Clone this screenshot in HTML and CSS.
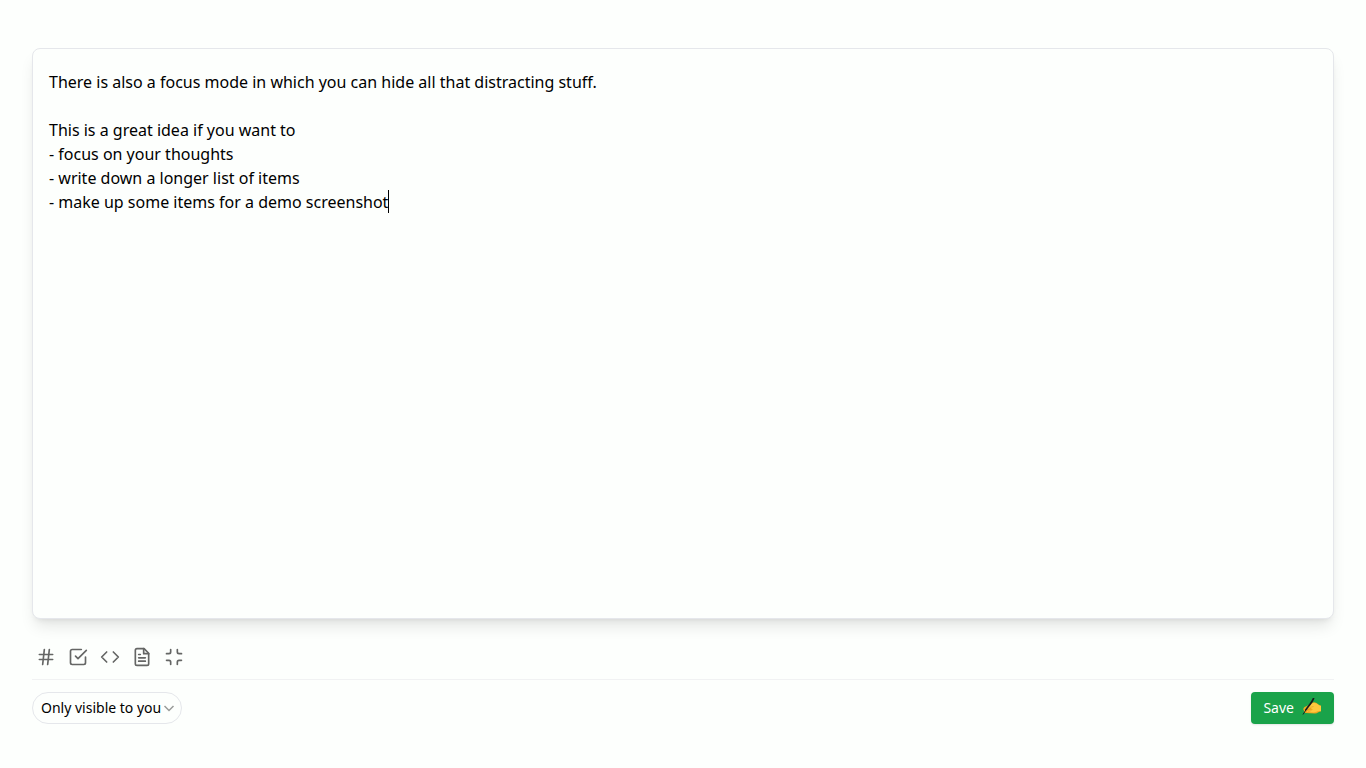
FILE: index.html
```
<!DOCTYPE html>
<html lang="en">
<head>
  <meta charset="UTF-8">
  <meta name="viewport" content="width=device-width, initial-scale=1.0">
  <title>Memo Editor</title>
  <link rel="stylesheet" href="styles.css">
</head>
<body>
  <form class="editor" id="editor">
    <div class="card">
      <textarea class="content" id="content" aria-label="Memo content" spellcheck="false">There is also a focus mode in which you can hide all that distracting stuff.

This is a great idea if you want to
- focus on your thoughts
- write down a longer list of items
- make up some items for a demo screenshot</textarea>
      <span class="caret"></span>
    </div>

    <div class="toolbar">
      <button type="button" class="tool" aria-label="Tag">
        <svg viewBox="0 0 24 24"><path d="M4 9h16M4 15h16M10 3 8 21M16 3l-2 18"/></svg>
      </button>
      <button type="button" class="tool" aria-label="Checklist">
        <svg viewBox="0 0 24 24"><path d="m9 11 3 3L22 4"/><path d="M21 12v7a2 2 0 0 1-2 2H5a2 2 0 0 1-2-2V5a2 2 0 0 1 2-2h11"/></svg>
      </button>
      <button type="button" class="tool" aria-label="Code">
        <svg viewBox="0 0 24 24"><path d="m16 18 6-6-6-6M8 6l-6 6 6 6"/></svg>
      </button>
      <button type="button" class="tool" aria-label="Attach file">
        <svg viewBox="0 0 24 24"><path d="M14.5 2H6a2 2 0 0 0-2 2v16a2 2 0 0 0 2 2h12a2 2 0 0 0 2-2V7.500z"/><path d="M14 2v6h6M16 13H8M16 17H8M10 9H8"/></svg>
      </button>
      <button type="button" class="tool" aria-label="Exit focus mode">
        <svg viewBox="0 0 24 24"><path d="M8 3v3a2 2 0 0 1-2 2H3M21 8h-3a2 2 0 0 1-2-2V3M3 16h3a2 2 0 0 1 2 2v3M16 21v-3a2 2 0 0 1 2-2h3"/></svg>
      </button>
    </div>

    <div class="footer">
      <div class="visibility">
        <select class="select" aria-label="Visibility">
          <option>Only visible to you</option>
        </select>
        <svg class="chevron" viewBox="0 0 24 24"><path d="m3 8 9 9 9-9"/></svg>
      </div>
      <button type="submit" class="save">
        Save
        <svg class="hand" viewBox="0 0 40 40" aria-hidden="true">
          <path fill="#f0a51e" d="M38 15c-5 0-6-5-12-6-4-1-7 1-10 4L5 18c-3 3-3 6-1 7-1 3 1 5 4 5l18 1c5 0 7-4 12-4z"/>
          <path fill="#ffc83d" d="M25 10c-4-1-8 2-12 6l-8 5 3 2 9-3 5 3-12 3v2l13 1c5 0 7-4 15-3V16c-5-1-7-5-13-6z"/>
          <path fill="none" stroke="#dc9320" stroke-width="1" d="m15 19 8-2M8 24l9-3M11 28l8-3"/>
          <path fill="none" stroke="#171a1c" stroke-width="3.500" stroke-linecap="round" d="M23 1C20 9 14 15 8 23"/>
          <path fill="none" stroke="#171a1c" stroke-width="2" d="m9 22-7 11"/>
        </svg>
      </button>
    </div>
  </form>

  <script>
    document.getElementById("editor").addEventListener("submit", function (event) {
      event.preventDefault();
    });
  </script>
</body>
</html>
```
FILE: styles.css
```
* {
  box-sizing: border-box;
}
body {
  margin: 0;
  background-color: #fdfffd;
  color: #000;
  font-family: "Noto Sans", sans-serif;
}
button, select, textarea {
  font: inherit;
  color: inherit;
}
.editor {
  display: flex;
  flex-direction: column;
  height: 100vh;
  padding: 48px 32px 44px;
}
.card {
  position: relative;
  display: flex;
  flex: 1;
  border: 1px solid #e5e7eb;
  border-radius: 8px;
  background-color: #fdfffd;
  box-shadow: 0 10px 15px -3px rgba(0, 0, 0, 0.1), 0 4px 6px -4px rgba(0, 0, 0, 0.1);
}
.content {
  flex: 1;
  padding: 21px 16px;
  border: none;
  outline: none;
  resize: none;
  background: transparent;
  font-size: 16px;
  line-height: 24px;
}
/* insertion point after the last line */
.caret {
  position: absolute;
  top: 141px;
  left: 355px;
  width: 1px;
  height: 23px;
  background-color: #000;
}
.toolbar {
  display: flex;
  gap: 4px;
  padding: 24px 0 8px;
  border-bottom: 1px solid #f1f2f3;
}
.tool {
  display: flex;
  align-items: center;
  justify-content: center;
  width: 28px;
  height: 28px;
  padding: 0;
  border: none;
  background: none;
  cursor: pointer;
}
.tool svg {
  width: 20px;
  height: 20px;
  fill: none;
  stroke: #656665;
  stroke-width: 2;
  stroke-linecap: round;
  stroke-linejoin: round;
}
.footer {
  display: flex;
  align-items: center;
  justify-content: space-between;
  padding-top: 12px;
  font-size: 14px;
  line-height: 20px;
}
.visibility {
  position: relative;
}
.select {
  appearance: none;
  width: 150px;
  height: 32px;
  padding: 0 8px;
  border: 1px solid #e5e7eb;
  border-radius: 16px;
  background: transparent;
}
.chevron {
  position: absolute;
  top: 10px;
  right: 7px;
  width: 12px;
  height: 12px;
  fill: none;
  stroke: #999b99;
  stroke-width: 3;
  pointer-events: none;
}
.save {
  display: flex;
  align-items: center;
  gap: 8px;
  height: 32px;
  padding: 0 12px;
  border: none;
  border-radius: 4px;
  background-color: #1aa34a;
  color: #fff;
  box-shadow: 0 1px 2px rgba(0, 0, 0, 0.1);
  cursor: pointer;
}
.hand {
  width: 20px;
  height: 20px;
}
```
